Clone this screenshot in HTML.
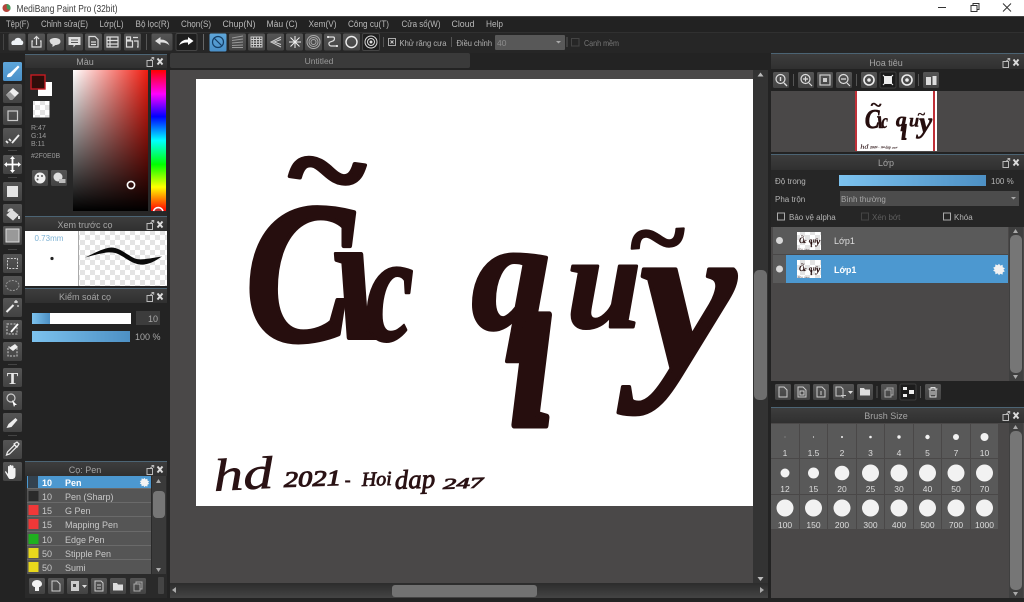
<!DOCTYPE html>
<html lang="vi">
<head>
<meta charset="utf-8">
<title>MediBang Paint Pro</title>
<style>
html,body{margin:0;padding:0;background:#222;width:1024px;height:602px;overflow:hidden}
svg{display:block}
text{font-family:"Liberation Sans","Noto Sans CJK SC",sans-serif;font-size:9px;fill:#b4b4b4}
.m{font-size:9.5px;fill:#b9b9b9}
.h{fill:#a4a4a4;text-anchor:middle}
.n{font-size:8.5px;fill:#ddd;text-anchor:middle}
.p{font-size:9px;fill:#c8c8c8}
.s{font-size:8px}
.art{font-family:"Liberation Serif",serif;font-weight:bold;font-style:italic;fill:#260e0e;stroke:#260e0e;stroke-linejoin:round}
.hw{font-family:"Liberation Serif",serif;font-style:italic;fill:#2a1214;stroke:#2a1214;stroke-width:.5}
.i{fill:none;stroke:#ddd;stroke-width:1.2}
.f{fill:#ddd}
</style>
</head>
<body>
<svg xmlns="http://www.w3.org/2000/svg" width="1024" height="602" viewBox="0 0 1024 602">
<defs>
<linearGradient id="btn" x1="0" y1="0" x2="0" y2="1"><stop offset="0" stop-color="#555"/><stop offset="1" stop-color="#434343"/></linearGradient>
<linearGradient id="blue" x1="0" y1="0" x2="0" y2="1"><stop offset="0" stop-color="#5ea6da"/><stop offset="1" stop-color="#4a90c8"/></linearGradient>
<linearGradient id="hdr" x1="0" y1="0" x2="0" y2="1"><stop offset="0" stop-color="#3d3d3d"/><stop offset="1" stop-color="#303030"/></linearGradient>
<linearGradient id="sl" x1="0" y1="0" x2="1" y2="0"><stop offset="0" stop-color="#7cc2ee"/><stop offset="1" stop-color="#4d90c4"/></linearGradient>
<linearGradient id="sat" x1="0" y1="0" x2="1" y2="0"><stop offset="0" stop-color="#fff"/><stop offset="1" stop-color="#f01c10"/></linearGradient>
<linearGradient id="val" x1="0" y1="0" x2="0" y2="1"><stop offset="0" stop-color="#000" stop-opacity="0"/><stop offset="1" stop-color="#000"/></linearGradient>
<linearGradient id="hs" x1="0" y1="0" x2="0" y2="1"><stop offset="0" stop-color="#2c2c2c"/><stop offset="1" stop-color="#444"/></linearGradient>
<linearGradient id="hue" x1="0" y1="0" x2="0" y2="1">
<stop offset="0" stop-color="#f00"/><stop offset=".17" stop-color="#f0f"/><stop offset=".33" stop-color="#00f"/><stop offset=".5" stop-color="#0ff"/><stop offset=".67" stop-color="#0f0"/><stop offset=".83" stop-color="#ff0"/><stop offset="1" stop-color="#f00"/>
</linearGradient>
<pattern id="chk" width="10" height="10" patternUnits="userSpaceOnUse"><rect width="10" height="10" fill="#fff"/><rect width="5" height="5" fill="#e4e4e4"/><rect x="5" y="5" width="5" height="5" fill="#e4e4e4"/></pattern>
<clipPath id="nav"><rect x="855" y="91" width="82" height="60"/></clipPath>
<clipPath id="l1"><rect x="797" y="232" width="24" height="18"/></clipPath>
<clipPath id="l2"><rect x="797" y="260" width="24" height="18"/></clipPath>
<g id="hi"><path d="M1 3.5h5.5v6H1zM4 3.5L7.5 0.5M5.5 0.5h2.2v2.2" fill="none" stroke="#bbb" stroke-width="1"/><path d="M11.5 1.5l5 6M16.5 1.5l-5 6" stroke="#ddd" stroke-width="1.9"/></g>
<rect id="tb" width="17" height="17" rx="1.5" fill="url(#btn)"/>
<rect id="tl" width="19" height="19" rx="1.5" fill="url(#btn)"/>
<rect id="sb" width="16" height="16" rx="1.5" fill="url(#btn)"/>
<path id="gear" d="M0-5.8l1.3 1.9 2.3-.8.2 2.4 2.1 1-1.5 1.5 1.5 1.5-2.1 1-.2 2.4-2.3-.8L0 5.8l-1.3-1.9-2.3.8-.2-2.4-2.1-1 1.5-1.5-1.5-1.5 2.1-1 .2-2.4 2.3.8z" fill="#f2f2f2"/>
</defs>

<!-- base -->
<rect width="1024" height="602" fill="#232323"/>

<!-- title bar -->
<rect width="1024" height="16" fill="#fff"/>
<circle cx="6.5" cy="8" r="4" fill="#b5453c"/><path d="M6.5 4a4 4 0 0 1 3.5 6l-3-1z" fill="#3f9b5a"/>
<text x="16.500" y="12" style="font-size:10.5px;fill:#3c3c3c" textLength="101" lengthAdjust="spacingAndGlyphs">MediBang Paint Pro (32bit)</text>
<path d="M938 7.500h8" stroke="#333" stroke-width="1"/>
<path d="M971 5.500h6v6h-6zM973 5.500V3.500h6v6h-2" fill="none" stroke="#333" stroke-width="1"/>
<path d="M1003 3.500l8 8M1011 3.500l-8 8" stroke="#333" stroke-width="1"/>
<rect y="16" width="1024" height="1" fill="#444"/>

<!-- menu -->
<rect y="17" width="1024" height="15" fill="#222"/>
<text class="m" x="6" y="27" textLength="23" lengthAdjust="spacingAndGlyphs">Tệp(F)</text>
<text class="m" x="41" y="27" textLength="47" lengthAdjust="spacingAndGlyphs">Chỉnh sửa(E)</text>
<text class="m" x="99.500" y="27" textLength="24" lengthAdjust="spacingAndGlyphs">Lớp(L)</text>
<text class="m" x="135.500" y="27" textLength="34" lengthAdjust="spacingAndGlyphs">Bộ lọc(R)</text>
<text class="m" x="181" y="27" textLength="30" lengthAdjust="spacingAndGlyphs">Chọn(S)</text>
<text class="m" x="222.500" y="27" textLength="33" lengthAdjust="spacingAndGlyphs">Chụp(N)</text>
<text class="m" x="266.500" y="27" textLength="31" lengthAdjust="spacingAndGlyphs">Màu (C)</text>
<text class="m" x="308.500" y="27" textLength="28" lengthAdjust="spacingAndGlyphs">Xem(V)</text>
<text class="m" x="348" y="27" textLength="41" lengthAdjust="spacingAndGlyphs">Công cụ(T)</text>
<text class="m" x="401.500" y="27" textLength="39" lengthAdjust="spacingAndGlyphs">Cửa sổ(W)</text>
<text class="m" x="451.500" y="27" textLength="23" lengthAdjust="spacingAndGlyphs">Cloud</text>
<text class="m" x="486" y="27" textLength="17" lengthAdjust="spacingAndGlyphs">Help</text>

<!-- toolbar -->
<rect y="32" width="1024" height="21" fill="#262626"/>
<rect y="32" width="1024" height="1" fill="#303030"/>
<rect x="3" y="34" width="1" height="16" fill="#444"/>
<use href="#tb" x="8.500" y="33.500"/><use href="#tb" x="28" y="33.500"/><use href="#tb" x="47" y="33.500"/><use href="#tb" x="66" y="33.500"/><use href="#tb" x="85" y="33.500"/><use href="#tb" x="104" y="33.500"/><use href="#tb" x="124" y="33.500"/>
<path d="M12 46c-2-3 1-5 2.500-4.500C15 38 21 38 21.500 41.500c2 0 2.500 3.500.5 4.500z" fill="#f0f4f8" transform="translate(0,-1)"/>
<path d="M33 41h-1v6h9v-6h-1M36.500 45v-8M34 39l2.500-2.500L39 39" class="i"/>
<path d="M49.500 41.500c0-2.500 2.500-3.500 5.500-3.500s5.500 1 5.500 3.500-3 3.500-5 3.500l-3 2v-2.500c-1.500-.5-2.500-1.500-2.500-3z" class="f"/>
<path d="M68.500 37h12v8h-5l-2 2.500v-2.500h-5z" class="f"/><path d="M71 40h7M71 42.500h7" stroke="#555"/>
<path d="M89 36.500h6l3 3v7.500h-9zM91 42h5M91 44.500h5" class="i" stroke-width="1"/>
<path d="M107 37h11v10h-11zM107 40.500h11M107 44h11M110 37v10" class="i" stroke-width=".9"/>
<path d="M126.500 41h6v6h-6zM126.500 37h4v3h-4zM133 37.500h5M134 41h4v6h-1" class="i" fill="#ddd" stroke-width="1"/>
<rect x="146" y="34" width="1" height="16" fill="#555"/>
<rect x="151.500" y="33.500" width="21" height="17" rx="1.500" fill="url(#btn)"/>
<rect x="176" y="33.500" width="21" height="17" rx="1.500" fill="#1d1d1d" stroke="#444"/>
<path d="M155 41l5.500-4v2.500c4 0 7.500 1.500 9 6-2.500-2.500-5-3-9-3V45z" fill="#e0e0e0"/>
<path d="M193.500 41l-5.500-4v2.500c-4 0-7.500 1.500-9 6 2.500-2.500 5-3 9-3V45z" fill="#fff"/>
<rect x="203" y="34" width="1" height="16" fill="#666"/>
<rect x="209.500" y="33.500" width="17" height="18" rx="1.500" fill="url(#blue)"/>
<circle cx="218" cy="42" r="5.500" fill="none" stroke="#143e66" stroke-width="1.200"/><path d="M214.500 38.500l7 7" stroke="#143e66" stroke-width="1.200"/>
<use href="#tb" x="229" y="33.500"/><use href="#tb" x="248" y="33.500"/><use href="#tb" x="267" y="33.500"/><use href="#tb" x="286" y="33.500"/><use href="#tb" x="305" y="33.500"/><use href="#tb" x="324" y="33.500"/><use href="#tb" x="343" y="33.500"/><rect x="362.500" y="33.500" width="17" height="17" rx="1.500" fill="#1f1f1f" stroke="#444"/>
<path d="M232 38l11-2M232 40.500l11-1.500M232 43l11-1M232 45.500l11-.5M232 47.500h11" stroke="#9a9a9a"/>
<path d="M251 37h11v10h-11zM251 39.500h11M251 42h11M251 44.500h11M253.500 37v10M256.500 37v10M259.500 37v10" stroke="#cfcfcf" fill="none" stroke-width=".9"/>
<path d="M281 37l-10 5 10 5M281 39.500l-7 2.500 7 2.500" stroke="#cfcfcf" fill="none"/>
<path d="M295 36v12M289 42h12M290.500 37.500l9 9M299.500 37.500l-9 9" stroke="#eee" fill="none"/>
<circle cx="313.500" cy="42" r="6.500" fill="none" stroke="#aaa"/><circle cx="313.500" cy="42" r="4.500" fill="none" stroke="#aaa"/><circle cx="313.500" cy="42" r="2.500" fill="none" stroke="#aaa"/>
<path d="M328 37h5c2 0 2 3 0 4l-3 1c-2 1-1 4 1 4h6" class="i"/><circle cx="328" cy="37" r="1" fill="#fff"/><circle cx="337" cy="46" r="1" fill="#fff"/>
<circle cx="351.500" cy="42" r="5.500" fill="none" stroke="#eee" stroke-width="1.400"/>
<circle cx="371" cy="42" r="6" fill="none" stroke="#ddd"/><circle cx="371" cy="42" r="3.500" fill="none" stroke="#ddd"/><circle cx="371" cy="42" r="1.500" fill="#ddd"/>
<rect x="383" y="37" width="1" height="10" fill="#555"/>
<rect x="388.500" y="38.500" width="7" height="7" fill="none" stroke="#aaa"/><path d="M390.500 40.500l3 3M393.500 40.500l-3 3" stroke="#ccc"/>
<text x="399.500" y="46" style="font-size:8.500px" textLength="47" lengthAdjust="spacingAndGlyphs">Khử răng cưa</text>
<rect x="451" y="37" width="1" height="10" fill="#555"/>
<text x="456.500" y="46" style="font-size:8.500px" textLength="35.500" lengthAdjust="spacingAndGlyphs">Điều chỉnh</text>
<rect x="495" y="35" width="70" height="15" rx="1" fill="#585858"/>
<text x="497" y="46" style="font-size:8.500px;fill:#8c8c8c">40</text>
<path d="M556 41h5l-2.500 2.500z" fill="#aaa"/>
<rect x="566.500" y="37" width="1" height="10" fill="#555"/>
<rect x="571.500" y="38.500" width="7.500" height="7.500" fill="none" stroke="#444"/>
<text x="584" y="46" style="font-size:8.500px;fill:#777" textLength="35" lengthAdjust="spacingAndGlyphs">Cạnh mềm</text>

<!-- tool column -->
<g>
<rect x="3" y="62" width="19" height="19" rx="1.500" fill="url(#blue)"/>
<use href="#tl" x="3" y="84"/><use href="#tl" x="3" y="106"/><use href="#tl" x="3" y="128"/>
<use href="#tl" x="3" y="155"/><use href="#tl" x="3" y="182"/><use href="#tl" x="3" y="204"/><use href="#tl" x="3" y="226"/>
<use href="#tl" x="3" y="254"/><use href="#tl" x="3" y="276"/><use href="#tl" x="3" y="298"/><use href="#tl" x="3" y="320"/><use href="#tl" x="3" y="342"/>
<use href="#tl" x="3" y="368"/><use href="#tl" x="3" y="391"/><use href="#tl" x="3" y="413"/>
<use href="#tl" x="3" y="440"/><use href="#tl" x="3" y="462"/>
<rect x="8" y="150" width="9" height="1" fill="#444"/><rect x="8" y="177" width="9" height="1" fill="#444"/><rect x="8" y="249" width="9" height="1" fill="#444"/><rect x="8" y="364" width="9" height="1" fill="#444"/><rect x="8" y="435" width="9" height="1" fill="#444"/>
<path d="M7 77c0-2 1-3.500 3-4l8-7.500 1.500 1.500-7 8c-1 2-3 2.500-5.500 2z" fill="#fff"/>
<path d="M6 95l7-7 6 5-7 7z" fill="#eee"/><path d="M6 95l4 5h2l3-3-5-5z" fill="#999"/>
<rect x="8" y="111" width="9.500" height="9.500" fill="none" stroke="#ccc" stroke-width="1.200"/>
<path d="M6 141l2 2M9 139l2 2M12 143l7-8" stroke="#eee" stroke-width="1.800" fill="none"/>
<path d="M12.500 157v15M5 164.500h15" stroke="#fff" stroke-width="1.800"/><path d="M12.500 156l2.500 3h-5zM12.500 173l2.500-3h-5zM4 164.500l3-2.500v5zM21 164.500l-3-2.500v5z" fill="#fff"/>
<rect x="7" y="186" width="11" height="11" fill="#e4e4e4"/>
<path d="M7 215l5-5 6 5-5 5zM8 212c0-3 3-4 5-2" fill="#ddd" stroke="#ddd"/><path d="M19 216v3" stroke="#ddd" stroke-width="2"/>
<rect x="6" y="229" width="13" height="13" fill="#999" stroke="#ddd"/>
<rect x="7.500" y="258.500" width="10" height="10" fill="none" stroke="#ccc" stroke-dasharray="2 1.300"/>
<ellipse cx="12.500" cy="285.500" rx="6.500" ry="5" fill="none" stroke="#999" stroke-dasharray="2 1.300"/>
<path d="M6.500 312l7-7" stroke="#eee" stroke-width="2"/><path d="M16 300v3M14 302h4M18 305v2" stroke="#fff"/>
<rect x="7" y="324" width="10" height="10" fill="none" stroke="#ccc" stroke-dasharray="2 1.300"/><path d="M11 332l7-8" stroke="#fff" stroke-width="1.800"/>
<rect x="8" y="347" width="9" height="9" fill="none" stroke="#ccc" stroke-dasharray="2 1.300"/><path d="M9 348l6-4 3 3-5 4z" fill="#eee"/>
<text x="12.500" y="384" style="font-family:'Liberation Serif',serif;font-weight:bold;font-size:17px;fill:#e8e8e8;text-anchor:middle">T</text>
<circle cx="11" cy="398" r="4" fill="none" stroke="#ccc" stroke-width="1.200"/><path d="M12 400l5 5-2 0-1 2z" fill="#fff"/>
<path d="M6.500 428l2-4 7-6 2 2-6 7z" fill="#eee"/>
<path d="M6.500 455l1-3 7-7 2 2-7 7zM14 444l3-2 2 2-2 3z" fill="none" stroke="#eee" stroke-width="1.200"/>
<path d="M8 477l-3-5c0-1 1-1 1.500 0l1.500 2v-7c0-1.500 1.500-1.500 1.500 0v4-5c0-1.500 2-1.500 2 0v5-4.500c0-1.500 2-1.500 2 0V472v-3c0-1.500 2-1.500 2 0v6c0 3-1.500 4-3.500 4H10c-1 0-1.500-1-2-2z" fill="#f2f2f2"/>
</g>

<!-- colour panel -->
<rect x="25" y="54" width="142" height="1" fill="#4c6474"/>
<rect x="25" y="55" width="142" height="13" fill="url(#hdr)"/>
<text class="h" x="85" y="65">Màu</text><use href="#hi" x="146" y="57"/>
<rect x="25" y="68" width="142" height="148" fill="#272727"/>
<rect x="38" y="82" width="14" height="14" fill="#fff"/>
<rect x="31" y="75" width="14" height="14" fill="#2f0e0b" stroke="#c61a22" stroke-width="1.400"/>
<rect x="33" y="101" width="16.500" height="16.500" fill="url(#chk)"/>
<text x="31" y="130" style="font-size:7px;fill:#9a9a9a">R:47</text>
<text x="31" y="138" style="font-size:7px;fill:#9a9a9a">G:14</text>
<text x="31" y="146" style="font-size:7px;fill:#9a9a9a">B:11</text>
<text x="31" y="158" style="font-size:7px;fill:#9a9a9a">#2F0E0B</text>
<use href="#sb" x="32" y="170"/><use href="#sb" x="51" y="170"/>
<circle cx="40" cy="178" r="5.500" fill="#eee"/><circle cx="38" cy="176" r="1" fill="#555"/><circle cx="42" cy="176" r="1" fill="#555"/><circle cx="37.500" cy="179.500" r="1" fill="#555"/>
<circle cx="58" cy="177" r="4.500" fill="#ddd"/><rect x="59" y="179" width="6.500" height="4" fill="#bbb"/>
<rect x="73" y="70" width="75" height="141" fill="url(#sat)"/>
<rect x="73" y="70" width="75" height="141" fill="url(#val)"/>
<circle cx="131" cy="185" r="3.600" fill="none" stroke="#fff" stroke-width="1.600"/>
<rect x="151" y="70" width="15" height="141" fill="url(#hue)"/>
<path d="M153.500 211a5 5 0 0 1 9.500 0" fill="#b33" stroke="#fff" stroke-width="1.600"/>

<!-- brush preview -->
<rect x="25" y="216" width="142" height="1" fill="#4c6474"/>
<rect x="25" y="217" width="142" height="14" fill="url(#hdr)"/>
<text class="h" x="85" y="228">Xem trước cọ</text><use href="#hi" x="146" y="220"/>
<rect x="25" y="231" width="53" height="55" fill="#fff"/>
<rect x="78" y="231" width="89" height="55" fill="url(#chk)"/>
<rect x="78" y="231" width="1" height="55" fill="#aaa"/>
<text x="34.500" y="241" style="font-size:8px;fill:#7fb3d5">0.73mm</text>
<circle cx="52" cy="258.500" r="1.600" fill="#222"/>
<path d="M85 257.500c9-4 17-9 26-10 9 0 15 7 24 11 5 2 14 0 27-2-5 3-10 7-18 8-10 1-17-6-25-10-8-4-15-2-34 3z" fill="#0a0a0a"/>

<!-- brush control -->
<rect x="25" y="288" width="142" height="1" fill="#4c6474"/>
<rect x="25" y="289" width="142" height="14" fill="url(#hdr)"/>
<text class="h" x="85" y="300">Kiểm soát cọ</text><use href="#hi" x="146" y="292"/>
<rect x="32" y="313" width="99" height="11" fill="#fff"/>
<rect x="32" y="313" width="18" height="11" fill="url(#sl)"/>
<rect x="136" y="311" width="24" height="14" fill="#3c3c3c"/>
<text x="158" y="322" style="font-size:9px;text-anchor:end;fill:#a8a8a8">10</text>
<rect x="32" y="331" width="98" height="11" fill="url(#sl)"/>
<text x="135" y="340" style="font-size:9px;fill:#a8a8a8">100 %</text>

<!-- brush list -->
<rect x="25" y="461" width="142" height="1" fill="#4c6474"/>
<rect x="25" y="462" width="142" height="14" fill="url(#hdr)"/>
<text class="h" x="85" y="473">Cọ: Pen</text><use href="#hi" x="146" y="465"/>
<rect x="25" y="476" width="142" height="122" fill="#2a2a2a"/>
<rect x="27" y="476" width="124" height="98" fill="#555"/>
<rect x="27" y="476" width="124" height="12" fill="#4c98d0"/>
<rect x="28" y="476" width="10" height="12" fill="#33424f"/>
<rect x="27" y="488" width="124" height="1" fill="#6a6a6a"/><rect x="27" y="502" width="124" height="1" fill="#6a6a6a"/><rect x="27" y="516" width="124" height="1" fill="#6a6a6a"/><rect x="27" y="531" width="124" height="1" fill="#6a6a6a"/><rect x="27" y="545" width="124" height="1" fill="#6a6a6a"/><rect x="27" y="559" width="124" height="1" fill="#6a6a6a"/>
<rect x="28.500" y="491" width="10" height="10" fill="#2a2a2a"/>
<rect x="28.500" y="505" width="10" height="10" fill="#f03838"/>
<rect x="28.500" y="519" width="10" height="10" fill="#f03838"/>
<rect x="28.500" y="534" width="10" height="10" fill="#1fb01f"/>
<rect x="28.500" y="548" width="10" height="10" fill="#e8d81c"/>
<rect x="28.500" y="562" width="10" height="10" fill="#e8d81c"/>
<text class="p" x="42" y="486" style="fill:#fff;font-weight:bold">10</text><text class="p" x="65" y="486" style="fill:#fff;font-weight:bold">Pen</text>
<text class="p" x="42" y="500">10</text><text class="p" x="65" y="500">Pen (Sharp)</text>
<text class="p" x="42" y="514">15</text><text class="p" x="65" y="514">G Pen</text>
<text class="p" x="42" y="528">15</text><text class="p" x="65" y="528">Mapping Pen</text>
<text class="p" x="42" y="543">10</text><text class="p" x="65" y="543">Edge Pen</text>
<text class="p" x="42" y="557">50</text><text class="p" x="65" y="557">Stipple Pen</text>
<text class="p" x="42" y="571">50</text><text class="p" x="65" y="571">Sumi</text>
<use href="#gear" transform="translate(144.500,482.500) scale(.8)"/>
<rect x="152" y="476" width="14" height="98" fill="#3a3a3a"/>
<rect x="153" y="491" width="12" height="27" rx="4" fill="#767676"/>
<path d="M158.500 479l-2.500 4h5zM158.500 572l-2.500-4h5z" fill="#aaa"/>
<use href="#sb" x="29" y="578"/><use href="#sb" x="48" y="578"/><use href="#sb" x="91" y="578"/><use href="#sb" x="110" y="578"/><use href="#sb" x="130" y="578"/>
<rect x="67" y="578" width="21" height="16" rx="1.500" fill="url(#btn)"/>
<path d="M37 580c-3 0-5 2-5 4 0 2 2 3 3 3v4h4v-4c1 0 3-1 3-3 0-2-2-4-5-4z" fill="#f2f2f2"/>
<path d="M52 581h5l3 3v7h-8z" fill="none" stroke="#ccc"/>
<path d="M71 581h8v10h-8z" fill="#ccc"/><rect x="73" y="584" width="3" height="3" fill="#444"/><path d="M82 585h5l-2.500 3z" fill="#ddd"/>
<path d="M95 581h6l2 2v8h-8zM97 585h4M97 588h4" fill="none" stroke="#ccc"/>
<path d="M113 583h4l1 1.500h5v6h-10z" fill="#ddd"/>
<path d="M134 584h6v7h-6zM136 584v-2h6v7h-2" fill="none" stroke="#aaa"/>
<rect x="158" y="577" width="6" height="17" rx="1" fill="#444"/>

<!-- canvas area -->
<rect x="170" y="53" width="300" height="15" rx="2" fill="#3a3a3a"/>
<text class="h" x="319" y="64" style="font-size:8.500px;fill:#999">Untitled</text>
<rect x="170" y="70" width="598" height="528" fill="#4a4848"/>
<rect x="196" y="79" width="557" height="427" fill="#fff"/>
<rect x="753" y="70" width="15" height="513" fill="#333"/>
<rect x="754" y="270" width="13" height="130" rx="5" fill="#6e6e6e"/>
<path d="M760.500 72.500l3 4h-6z" fill="#bbb"/><path d="M760.500 581l3-4h-6z" fill="#bbb"/>
<rect x="170" y="583" width="598" height="15" fill="url(#hs)"/>
<rect x="392" y="585" width="145" height="12" rx="3" fill="#727272"/>
<path d="M172 590l4-3v6zM764 590l-4-3v6z" fill="#aaa"/>

<!-- artwork as real text -->
<g id="art">
<text class="art" transform="translate(285,203) rotate(8) scale(1.25,1)" style="font-size:115px;stroke-width:3.500;font-style:normal">~</text>
<text class="art" transform="translate(246,340) scale(.8,1)" style="font-size:200px;stroke-width:5">C</text>
<text class="art" transform="translate(345,338) skewX(12) scale(.8,1)" style="font-size:183px;stroke-width:4">ı</text>
<text class="art" transform="translate(366,340) scale(.7,1)" style="font-size:153px;stroke-width:3">c</text>
<text class="art" transform="translate(472,328)" style="font-size:156px;stroke-width:4">q</text>
<text class="art" transform="translate(510,425) scale(.7,1)" style="font-size:240px;stroke-width:7">ı</text>
<text class="art" transform="translate(567,327)" style="font-size:133px;stroke-width:3">u</text>
<text class="art" transform="translate(640,368)" style="font-size:215px;stroke-width:4">y</text>
<text class="art" transform="translate(632,271) rotate(-3) scale(1,.9)" style="font-size:105px;stroke-width:2;font-style:normal">~</text>
<text class="hw" transform="translate(214,491) rotate(-3) scale(1.3,1)" style="font-size:46px">hd</text>
<text class="hw" transform="translate(284,487) rotate(-2) scale(1.3,1)" style="font-size:22px;stroke-width:1">2021</text>
<text class="hw" transform="translate(345,485)" style="font-size:16px;stroke-width:1">-</text>
<text class="hw" transform="translate(362,486) rotate(-2)" style="font-size:20px;stroke-width:.8">Hoi</text>
<text class="hw" transform="translate(395,489) rotate(-2)" style="font-size:27px;stroke-width:.8">dap</text>
<text class="hw" transform="translate(443,489) rotate(-2) scale(1.8,1)" style="font-size:15px;stroke-width:.8">247</text>
</g>

<!-- navigator -->
<rect x="771" y="53" width="253" height="1" fill="#4c6474"/>
<rect x="771" y="54" width="253" height="15" fill="url(#hdr)"/>
<text class="h" x="886" y="66">Hoa tiêu</text><use href="#hi" x="1002" y="58"/>
<rect x="771" y="69" width="253" height="22" fill="#222"/>
<use href="#sb" x="773" y="72"/><use href="#sb" x="798" y="72"/><use href="#sb" x="817" y="72"/><use href="#sb" x="836" y="72"/><use href="#sb" x="861" y="72"/><rect x="880" y="72" width="16" height="16" rx="1.500" fill="#1c1c1c" stroke="#3c3c3c"/><use href="#sb" x="899" y="72"/><use href="#sb" x="923" y="72"/>
<circle cx="780.500" cy="79" r="4.500" fill="none" stroke="#ddd" stroke-width="1.200"/><path d="M784 83l3 3M780.500 77v4" stroke="#ddd" stroke-width="1.400"/>
<circle cx="805.500" cy="79" r="4.500" fill="none" stroke="#ddd" stroke-width="1.200"/><path d="M809 83l3 3M803 79h5M805.500 76.500v5" stroke="#ddd" stroke-width="1.200"/>
<rect x="820" y="75" width="10" height="10" fill="none" stroke="#ccc" stroke-width="1.200"/><rect x="823" y="78" width="4" height="4" fill="#ccc"/>
<circle cx="843.500" cy="79" r="4.500" fill="none" stroke="#ddd" stroke-width="1.200"/><path d="M847 83l3 3M841 79h5" stroke="#ddd" stroke-width="1.200"/>
<circle cx="869" cy="80" r="5" fill="none" stroke="#eee" stroke-width="1.600"/><circle cx="869" cy="80" r="1.800" fill="#eee"/>
<rect x="884" y="76" width="8" height="8" fill="#eee"/><path d="M883 75l2 2M893 75l-2 2M883 85l2-2M893 85l-2-2" stroke="#eee"/>
<circle cx="907" cy="80" r="5" fill="none" stroke="#eee" stroke-width="1.600"/><circle cx="907" cy="80" r="1.800" fill="#eee"/>
<path d="M926 77h5v8h-5zM932.500 76h4v9h-4z" fill="#ddd"/>
<rect x="793" y="74" width="1" height="12" fill="#555"/><rect x="856" y="74" width="1" height="12" fill="#555"/><rect x="918" y="74" width="1" height="12" fill="#555"/>
<rect x="771" y="91" width="253" height="61" fill="#4a4848"/>
<rect x="855" y="91" width="82" height="60" fill="#fff"/>
<rect x="855" y="91" width="2" height="60" fill="#c03038"/><rect x="933" y="91" width="2" height="60" fill="#c03038"/>
<g clip-path="url(#nav)"><use href="#art" transform="translate(831,81.300) scale(.1375)"/></g>

<!-- layer panel -->
<rect x="771" y="154" width="253" height="1" fill="#4c6474"/>
<rect x="771" y="155" width="253" height="15" fill="url(#hdr)"/>
<text class="h" x="886" y="166">Lớp</text><use href="#hi" x="1002" y="158"/>
<rect x="771" y="170" width="253" height="57" fill="#262626"/>
<text class="s" x="775" y="184">Độ trong</text>
<rect x="839" y="175" width="147" height="11" fill="url(#sl)"/>
<text class="s" x="991" y="184">100 %</text>
<text class="s" x="775" y="202">Pha trộn</text>
<rect x="840" y="191" width="179" height="15" fill="#4c4c4c"/>
<text class="s" x="841" y="202" style="fill:#a8a8a8">Bình thường</text>
<path d="M1011 197h5l-2.500 2.500z" fill="#aaa"/>
<rect x="777.500" y="213" width="7" height="7" fill="none" stroke="#aaa"/>
<text class="s" x="789" y="220">Bảo vệ alpha</text>
<rect x="861.500" y="213" width="7" height="7" fill="none" stroke="#444"/>
<text class="s" x="872" y="220" style="fill:#5e5e5e">Xén bớt</text>
<rect x="943.500" y="213" width="7" height="7" fill="none" stroke="#aaa"/>
<text class="s" x="954" y="220">Khóa</text>
<rect x="771" y="227" width="253" height="154" fill="#4a4848"/>
<rect x="773" y="227" width="235" height="27" fill="#5a5a5a"/>
<rect x="773" y="255" width="13" height="28" fill="#5a5a5a"/>
<rect x="786" y="255" width="222" height="28" fill="#4c98d0"/>
<circle cx="779.500" cy="240.500" r="3.500" fill="#d8d8d8"/>
<circle cx="779.500" cy="269" r="3.500" fill="#d8d8d8"/>
<rect x="797" y="232" width="24" height="18" fill="url(#chk)"/>
<rect x="797" y="260" width="24" height="18" fill="url(#chk)"/>
<g clip-path="url(#l1)"><use href="#art" transform="translate(788.600,228.600) scale(.043)"/></g>
<g clip-path="url(#l2)"><use href="#art" transform="translate(788.600,256.600) scale(.043)"/></g>
<text x="834" y="244" style="font-size:9px;fill:#ddd">Lớp1</text>
<text x="834" y="273" style="font-size:9px;fill:#fff;font-weight:bold">Lớp1</text>
<use href="#gear" transform="translate(999,269.500)"/>
<rect x="1009" y="227" width="14" height="154" fill="#3f3f3f"/>
<rect x="1010" y="235" width="12" height="138" rx="5" fill="#767676"/>
<path d="M1015.500 229l-2.500 4h5zM1015.500 379l-2.500-4h5z" fill="#aaa"/>
<rect x="771" y="381" width="253" height="22" fill="#222"/>
<use href="#sb" x="775" y="384"/><use href="#sb" x="794" y="384"/><use href="#sb" x="813" y="384"/><rect x="833" y="384" width="21" height="16" rx="1.500" fill="url(#btn)"/><use href="#sb" x="857" y="384"/><use href="#sb" x="881" y="384"/><rect x="900" y="384" width="16" height="16" rx="1.500" fill="#1c1c1c" stroke="#3c3c3c"/><use href="#sb" x="925" y="384"/>
<path d="M779 387h5l3 3v7h-8z" fill="none" stroke="#ccc"/>
<path d="M798 387h5l3 3v7h-8zM800 391h4v4h-4z" fill="none" stroke="#ccc"/>
<path d="M817 387h5l3 3v7h-8zM821 395v-4" fill="none" stroke="#ccc"/>
<path d="M836 387h5l2 2v7h-7zM843 393v5M841 395.500h5" fill="none" stroke="#ccc"/><path d="M848 391h5l-2.500 3z" fill="#ddd"/>
<path d="M860 388h4l1 1.500h5v6h-10z" fill="#ddd"/>
<path d="M885 390h6v7h-6zM887 390v-2h6v7h-2" fill="none" stroke="#aaa"/>
<rect x="903" y="387" width="4" height="3" fill="#eee"/><rect x="903" y="394" width="4" height="3" fill="#eee"/><rect x="909" y="390" width="5" height="4" fill="#eee"/>
<path d="M928.500 389h9M930 389v8h6v-8M932 391v4M934 391v4M931 389v-1.500h4V389" fill="none" stroke="#ddd"/>
<rect x="876.500" y="386" width="1" height="12" fill="#555"/><rect x="920" y="386" width="1" height="12" fill="#555"/>

<!-- brush size panel -->
<rect x="771" y="407" width="253" height="1" fill="#4c6474"/>
<rect x="771" y="408" width="253" height="15" fill="url(#hdr)"/>
<text class="h" x="886" y="419">Brush Size</text><use href="#hi" x="1002" y="411"/>
<rect x="771" y="423" width="253" height="175" fill="#4a4848"/>
<g fill="#595959">
<rect x="771" y="424" width="28" height="34"/><rect x="800" y="424" width="27" height="34"/><rect x="828" y="424" width="28" height="34"/><rect x="857" y="424" width="27" height="34"/><rect x="885" y="424" width="28" height="34"/><rect x="914" y="424" width="27" height="34"/><rect x="942" y="424" width="28" height="34"/><rect x="971" y="424" width="27" height="34"/>
<rect x="771" y="459" width="28" height="35"/><rect x="800" y="459" width="27" height="35"/><rect x="828" y="459" width="28" height="35"/><rect x="857" y="459" width="27" height="35"/><rect x="885" y="459" width="28" height="35"/><rect x="914" y="459" width="27" height="35"/><rect x="942" y="459" width="28" height="35"/><rect x="971" y="459" width="27" height="35"/>
<rect x="771" y="495" width="28" height="34"/><rect x="800" y="495" width="27" height="34"/><rect x="828" y="495" width="28" height="34"/><rect x="857" y="495" width="27" height="34"/><rect x="885" y="495" width="28" height="34"/><rect x="914" y="495" width="27" height="34"/><rect x="942" y="495" width="28" height="34"/><rect x="971" y="495" width="27" height="34"/>
</g>
<g fill="#f2f2f2">
<circle cx="785" cy="437" r=".4"/><circle cx="813.500" cy="437" r=".6"/><circle cx="842" cy="437" r="1"/><circle cx="870.500" cy="437" r="1.300"/><circle cx="899" cy="437" r="1.700"/><circle cx="927.500" cy="437" r="2.200"/><circle cx="956" cy="437" r="3"/><circle cx="984.500" cy="437" r="4"/>
<circle cx="785" cy="473" r="4.500"/><circle cx="813.500" cy="473" r="5.500"/><circle cx="842" cy="473" r="7.300"/><circle cx="870.500" cy="473" r="8.500"/><circle cx="899" cy="473" r="8.500"/><circle cx="927.500" cy="473" r="8.500"/><circle cx="956" cy="473" r="8.500"/><circle cx="984.500" cy="473" r="8.500"/>
<circle cx="785" cy="508" r="8.500"/><circle cx="813.500" cy="508" r="8.500"/><circle cx="842" cy="508" r="8.500"/><circle cx="870.500" cy="508" r="8.500"/><circle cx="899" cy="508" r="8.500"/><circle cx="927.500" cy="508" r="8.500"/><circle cx="956" cy="508" r="8.500"/><circle cx="984.500" cy="508" r="8.500"/>
</g>
<text class="n" x="785" y="456">1</text><text class="n" x="813.500" y="456">1.5</text><text class="n" x="842" y="456">2</text><text class="n" x="870.500" y="456">3</text><text class="n" x="899" y="456">4</text><text class="n" x="927.500" y="456">5</text><text class="n" x="956" y="456">7</text><text class="n" x="984.500" y="456">10</text>
<text class="n" x="785" y="492">12</text><text class="n" x="813.500" y="492">15</text><text class="n" x="842" y="492">20</text><text class="n" x="870.500" y="492">25</text><text class="n" x="899" y="492">30</text><text class="n" x="927.500" y="492">40</text><text class="n" x="956" y="492">50</text><text class="n" x="984.500" y="492">70</text>
<text class="n" x="785" y="528">100</text><text class="n" x="813.500" y="528">150</text><text class="n" x="842" y="528">200</text><text class="n" x="870.500" y="528">300</text><text class="n" x="899" y="528">400</text><text class="n" x="927.500" y="528">500</text><text class="n" x="956" y="528">700</text><text class="n" x="984.500" y="528">1000</text>
<rect x="1009" y="423" width="14" height="175" fill="#3f3f3f"/>
<rect x="1010" y="431" width="12" height="159" rx="5" fill="#767676"/>
<path d="M1015.500 425l-2.500 4h5zM1015.500 596l-2.500-4h5z" fill="#aaa"/>
</svg>
</body>
</html>
